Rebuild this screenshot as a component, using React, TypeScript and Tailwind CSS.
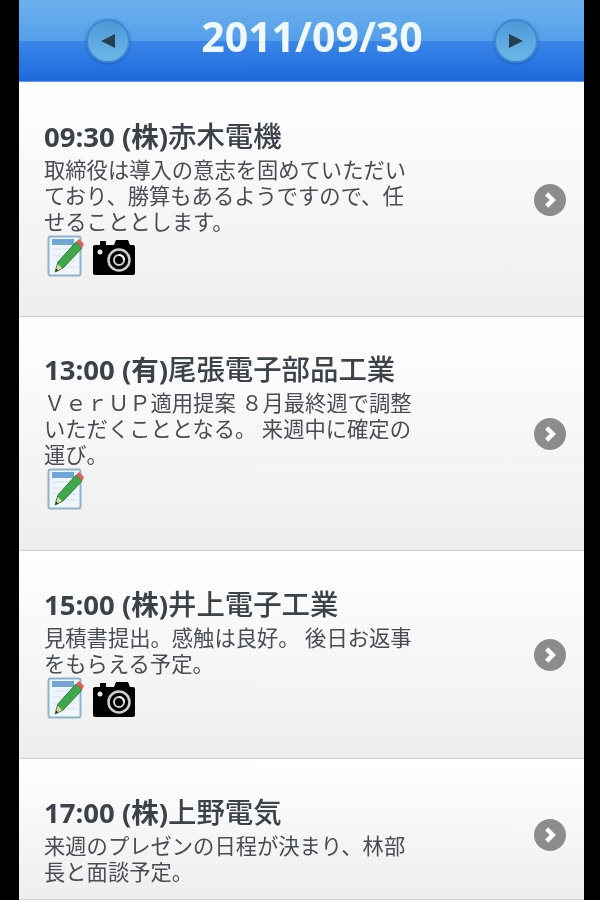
import React from "react";

const FONT = "[font-family:'Open_Sans','Noto_Sans_CJK_JP',sans-serif]";

function Memo() {
  return (
    <svg width="38" height="42" viewBox="0 0 38 42" className="shrink-0">
      <rect x="1.5" y="1.5" width="32" height="39" rx="2" fill="#eef5fb" stroke="#8fb2cc" strokeWidth="2" />
      <rect x="5" y="4" width="22" height="6" fill="#6fa6d6" />
      <path d="M6 14h23M6 20h23M6 26h23M6 32h23" stroke="#d4e2ee" strokeWidth="1" />
      <path d="M8 37 L11 27 L29 7 L35 13 L16 33 Z" fill="#3fa84a" stroke="#2c7a35" strokeWidth="1" />
      <path d="M29 7 L32 4 L37 9 L35 13 Z" fill="#d9635f" />
      <path d="M8 37 L11 29 L15 33 Z" fill="#e8cfa6" />
      <path d="M8 37 L9.3 33.5 L11.5 35.5 Z" fill="#333" />
    </svg>
  );
}

function Camera() {
  return (
    <svg width="44" height="38" viewBox="0 0 44 38" className="shrink-0 mt-[2px]">
      <path d="M3 7h5V3h6v4h8l2-5h12l2 5h3a2 2 0 0 1 2 2v26a2 2 0 0 1-2 2H3a2 2 0 0 1-2-2V9a2 2 0 0 1 2-2Z" fill="#000" />
      <circle cx="8" cy="14" r="2.5" fill="#e5e5e5" />
      <circle cx="27" cy="22" r="10.5" fill="none" stroke="#cfcfcf" strokeWidth="2.5" />
      <circle cx="27" cy="22" r="5" fill="none" stroke="#cfcfcf" strokeWidth="2" />
      <path d="M27 17a5 5 0 0 1 5 5" stroke="#fff" strokeWidth="2" fill="none" />
    </svg>
  );
}

function NavButton({ dir }: { dir: "left" | "right" }) {
  return (
    <div className="w-[44px] h-[44px] rounded-full bg-gradient-to-b from-[#4f97d8] to-[#6bb8e6] border-2 border-[#3f86d0] flex items-center justify-center shadow-[0_1px_3px_rgba(10,60,140,0.5)] blur-[0.5px]">
      <svg width="18" height="18" viewBox="0 0 18 18">
        {dir === "left" ? <path d="M2 9 L16 2 V16 Z" fill="#26404f" /> : <path d="M16 9 L2 2 V16 Z" fill="#26404f" />}
      </svg>
    </div>
  );
}

function Chevron() {
  return (
    <div className="w-[32px] h-[32px] rounded-full bg-[#8c8c8c] flex items-center justify-center shrink-0 shadow-[0_0_3px_#fff] blur-[0.5px]">
      <svg width="20" height="20" viewBox="0 0 18 18">
        <path d="M6 3.5 L11.5 9 L6 14.5" fill="none" stroke="#fff" strokeWidth="4" />
      </svg>
    </div>
  );
}

function Item({ cls, time, co, lines, memo, cam, chevCls, ptCls }: { cls: string; time: string; co: string; lines: string[]; memo?: boolean; cam?: boolean; chevCls: string; ptCls: string }) {
  return (
    <div className={`${cls} bg-gradient-to-b from-white to-[#eeeeee] border-b border-[#cfcfcf] flex items-start justify-between pl-[25px] pr-[18px] ${ptCls}`}>
      <div className="w-[400px] blur-[0.6px]">
        <div className="text-[27.5px] leading-[38px] font-bold text-[#3b4248] whitespace-nowrap">
          {time}
          <span className="font-medium text-[28.4px]">{co}</span>
        </div>
        <div className="text-[21.3px] leading-[26px] text-[#474d52] whitespace-nowrap mt-[1px]">
          {lines.map((l) => (
            <div key={l}>{l}</div>
          ))}
        </div>
        {(memo || cam) && (
          <div className="flex items-center gap-[7px] pl-[3px]">
            {memo && <Memo />}
            {cam && <Camera />}
          </div>
        )}
      </div>
      <div className={chevCls}>
        <Chevron />
      </div>
    </div>
  );
}

export default function App() {
  return (
    <div className={`w-[600px] h-[900px] bg-black pl-[19px] pr-[16px] overflow-hidden ${FONT}`}>
      <div className="w-[565px] h-[900px] overflow-hidden bg-white">
        <div className="h-[82px] relative border-b border-[#5b9be8] flex items-center pl-[67px] pr-[46px]">
          <div className="absolute left-0 right-0 top-0 h-[41px] bg-gradient-to-b from-[#6cb0ee] to-[#559fe9]" />
          <div className="absolute left-0 right-0 top-[41px] h-[40px] bg-gradient-to-b from-[#3a86e8] to-[#1e69de]" />
          <div className="relative z-10 mt-[1px]"><NavButton dir="left" /></div>
          <div className="relative z-10 flex-1 text-center text-[41px] font-bold text-[#f0f8ff] leading-none mb-[8px] blur-[0.5px]">2011/09/30</div>
          <div className="relative z-10 mt-[1px]"><NavButton dir="right" /></div>
        </div>
        <Item
          cls="h-[235px]"
          ptCls="pt-[35px]"
          chevCls="mt-[67px]"
          time="09:30 (株)"
          co="赤木電機"
          lines={["取締役は導入の意志を固めていただい", "ており、勝算もあるようですので、任", "せることとします。"]}
          memo
          cam
        />
        <Item
          cls="h-[234px]"
          ptCls="pt-[33px]"
          chevCls="mt-[68px]"
          time="13:00 (有)"
          co="尾張電子部品工業"
          lines={["ＶｅｒＵＰ適用提案 ８月最終週で調整", "いただくこととなる。 来週中に確定の", "運び。"]}
          memo
        />
        <Item
          cls="h-[208px]"
          ptCls="pt-[34px]"
          chevCls="mt-[54px]"
          time="15:00 (株)"
          co="井上電子工業"
          lines={["見積書提出。感触は良好。 後日お返事", "をもらえる予定。"]}
          memo
          cam
        />
        <Item
          cls="h-[141px]"
          ptCls="pt-[34px]"
          chevCls="mt-[26px]"
          time="17:00 (株)"
          co="上野電気"
          lines={["来週のプレゼンの日程が決まり、林部", "長と面談予定。"]}
        />
      </div>
    </div>
  );
}
